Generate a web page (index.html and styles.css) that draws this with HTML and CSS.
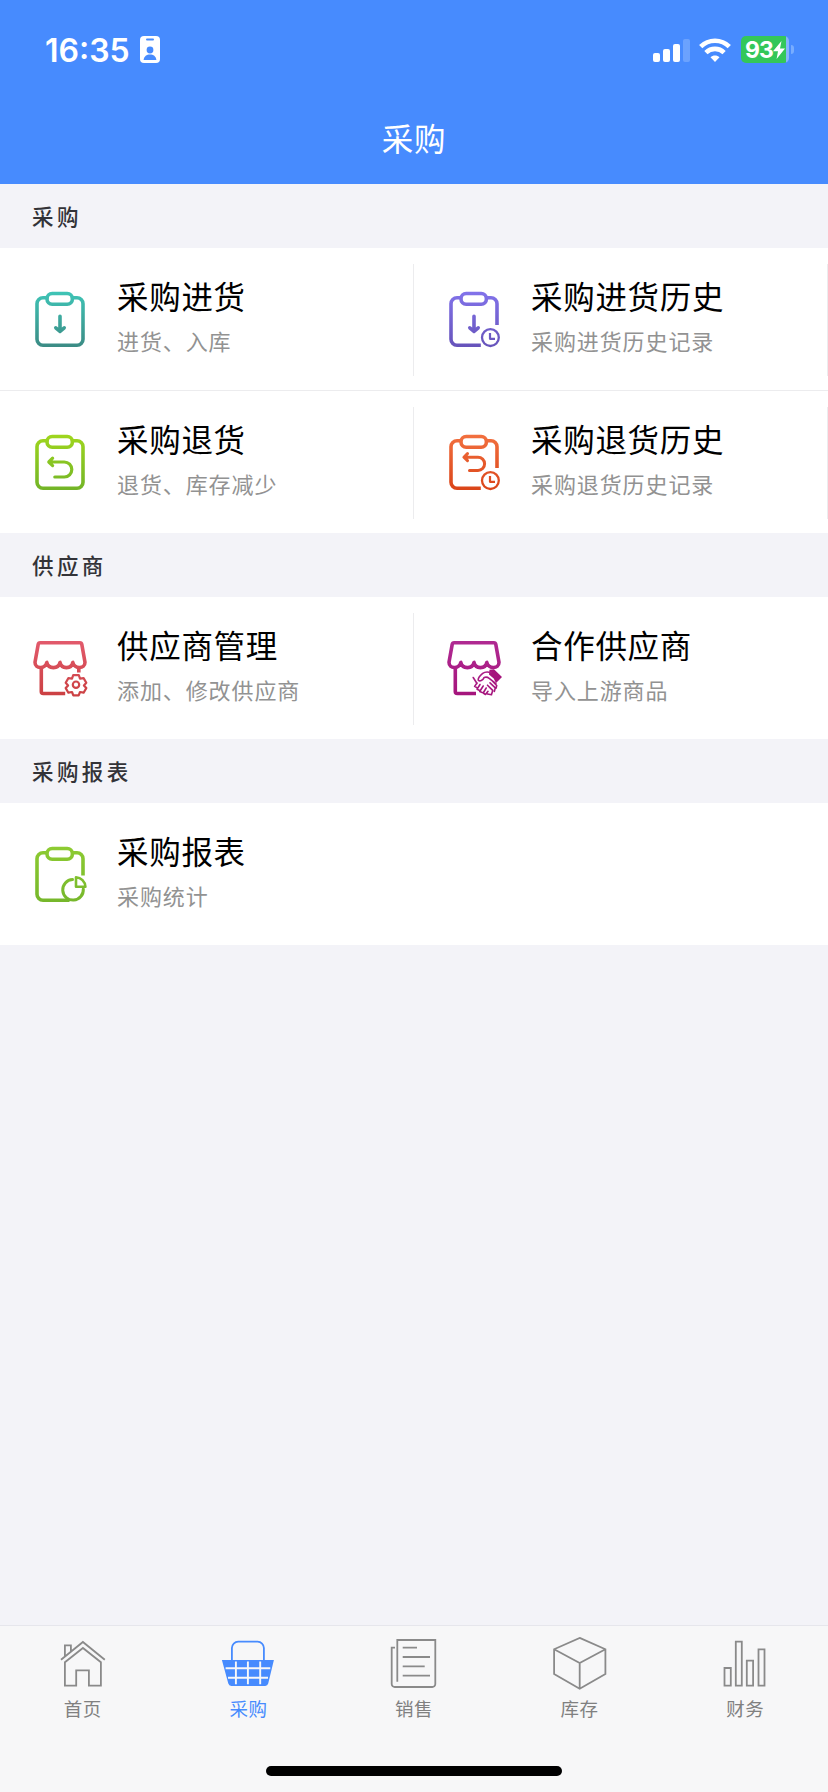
FILE: index.html
```html
<!DOCTYPE html>
<html lang="zh-CN">
<head>
<meta charset="utf-8">
<title>采购</title>
<link rel="stylesheet" href="styles.css">
</head>
<body>
<svg class="defs" width="0" height="0" aria-hidden="true">
  <defs>
    <linearGradient id="teal" gradientUnits="userSpaceOnUse" x1="0" y1="3" x2="0" y2="58"><stop offset="0" stop-color="#3fc4b6"/><stop offset="1" stop-color="#3b8b84"/></linearGradient>
    <linearGradient id="purple" gradientUnits="userSpaceOnUse" x1="0" y1="3" x2="0" y2="58"><stop offset="0" stop-color="#8273ea"/><stop offset="1" stop-color="#6653ba"/></linearGradient>
    <linearGradient id="lime" gradientUnits="userSpaceOnUse" x1="0" y1="3" x2="0" y2="58"><stop offset="0" stop-color="#9fd61e"/><stop offset="1" stop-color="#72b427"/></linearGradient>
    <linearGradient id="orange" gradientUnits="userSpaceOnUse" x1="0" y1="3" x2="0" y2="58"><stop offset="0" stop-color="#f2703f"/><stop offset="1" stop-color="#da4418"/></linearGradient>
    <linearGradient id="red" gradientUnits="userSpaceOnUse" x1="0" y1="3" x2="0" y2="58"><stop offset="0" stop-color="#e25a6c"/><stop offset="1" stop-color="#cb4042"/></linearGradient>
    <linearGradient id="magenta" gradientUnits="userSpaceOnUse" x1="0" y1="3" x2="0" y2="58"><stop offset="0" stop-color="#b02a92"/><stop offset="1" stop-color="#a5147c"/></linearGradient>
    <linearGradient id="leaf" gradientUnits="userSpaceOnUse" x1="0" y1="3" x2="0" y2="58"><stop offset="0" stop-color="#8dcb32"/><stop offset="1" stop-color="#76b72b"/></linearGradient>
    <g id="clip"><rect x="17" y="4.5" width="25.4" height="10.8" rx="5.2"/></g>
    <g id="board"><path d="M17 8.8H13a6 6 0 0 0-6 6V50.2a6 6 0 0 0 6 6H47a6 6 0 0 0 6-6V14.8a6 6 0 0 0-6-6H42.4"/></g>
    <g id="board-open"><path stroke-linecap="butt" d="M17 8.8H13a6 6 0 0 0-6 6V50.2a6 6 0 0 0 6 6H36.8M42.4 8.8H47a6 6 0 0 1 6 6V36"/></g>
    <g id="clock"><circle cx="46.4" cy="48.6" r="8.4" stroke-width="2.3"/><path stroke-width="2.2" stroke-linecap="butt" d="M46 44v5.8h5"/></g>
    <g id="awning"><path d="M10.2 4.8H49.8a2 2 0 0 1 2 1.6L55 24.2C55 31.2 44.5 31.4 42.8 24.4C41.5 31.4 31.5 31.4 30 24.4C28.5 31.4 18.3 31.4 16.8 24.4C15.2 31.4 5 31.2 5 24.2L8.2 6.4a2 2 0 0 1 2-1.6Z"/></g>
  </defs>
</svg>
<div class="screen">
  <header class="header">
    <div class="status">
      <div class="status-left">
        <span class="time">16:35</span>
        <svg class="badge-icon" viewBox="0 0 20 27"><rect width="20" height="27" rx="4" fill="#fff"/><rect x="6" y="2.6" width="8" height="2" rx="1" fill="#478bfe"/><circle cx="10" cy="14" r="3.4" fill="#478bfe"/><path d="M3.6 24c.4-3.700 3-5.500 6.400-5.500s6 1.800 6.400 5.500z" fill="#478bfe"/></svg>
      </div>
      <div class="status-right">
        <svg class="signal" viewBox="0 0 38 24" fill="#fff"><rect y="15" width="7" height="9" rx="2"/><rect x="10" y="11" width="7" height="13" rx="2"/><rect x="20" y="6" width="7" height="18" rx="2"/><rect x="30" y="1" width="7" height="23" rx="2" opacity=".2"/></svg>
        <svg class="wifi" viewBox="0 0 32 24"><g fill="none" stroke="#fff" stroke-width="4.600"><path d="M1.700 8.700a20.300 20.300 0 0 1 28.600 0"/><path d="M6.900 14.600a13 13 0 0 1 18.200 0"/></g><path d="M16 24l-4.500-4.700c2.400-2.300 6.600-2.300 9 0z" fill="#fff"/></svg>
        <div class="battery"><span class="battery-level">93</span><svg class="bolt" viewBox="0 0 12 18"><path d="M8.500 0L0 10.200h5L3.600 18L12 7.400H7z" fill="#fff"/></svg></div>
        <span class="battery-tip"></span>
      </div>
    </div>
    <h1 class="title">采购</h1>
  </header>

  <main class="content">
    <h2 class="section">采购</h2>
    <div class="grid">
      <div class="item lined">
        <svg class="icon" viewBox="0 0 60 60" stroke="url(#teal)"><use href="#board"/><use href="#clip"/><path d="M30 27.300V42M25.800 38.800L30 42.500L34.200 38.800"/></svg>
        <div class="text"><div class="name">采购进货</div><div class="desc">进货、入库</div></div>
      </div>
      <div class="item lined">
        <svg class="icon" viewBox="0 0 60 60" stroke="url(#purple)"><use href="#board-open"/><use href="#clip"/><path d="M30 27.300V42M25.800 38.800L30 42.500L34.200 38.800"/><use href="#clock"/></svg>
        <div class="text"><div class="name">采购进货历史</div><div class="desc">采购进货历史记录</div></div>
      </div>
      <div class="rule"></div>
      <div class="item lined">
        <svg class="icon" viewBox="0 0 60 60" stroke="url(#lime)"><use href="#board"/><use href="#clip"/><path stroke-width="3.200" d="M20 30H34.300a7.500 7.500 0 0 1 0 15H24.800M22.600 26.200L18.800 30L22.600 33.600"/></svg>
        <div class="text"><div class="name">采购退货</div><div class="desc">退货、库存减少</div></div>
      </div>
      <div class="item lined">
        <svg class="icon" viewBox="0 0 60 60" stroke="url(#orange)"><use href="#board-open"/><use href="#clip"/><path stroke-width="3" d="M21 25.200H34a6.600 6.600 0 0 1 0 13.200H25.500M23.500 21.600L19.900 25.200L23.500 28.700"/><use href="#clock"/></svg>
        <div class="text"><div class="name">采购退货历史</div><div class="desc">采购退货历史记录</div></div>
      </div>
    </div>

    <h2 class="section">供应商</h2>
    <div class="grid">
      <div class="item lined">
        <svg class="icon" viewBox="0 0 60 60" stroke="url(#red)"><use href="#awning"/><path stroke-linecap="butt" d="M11.300 29V53.500a2 2 0 0 0 2 2H35.200M48.800 29V34.500"/><g stroke-width="2.200"><circle cx="46" cy="46.700" r="3.200"/><path d="M43.200 37.200h5.600l1.200 3.500 3.600-.6 2.700 4.700-2.400 2.600 2.400 2.700-2.700 4.600-3.600-.7-1.300 3.300h-5.400l-1.300-3.300-3.600.7-2.700-4.600 2.400-2.700-2.400-2.600 2.700-4.700 3.600.6z"/></g></svg>
        <div class="text"><div class="name">供应商管理</div><div class="desc">添加、修改供应商</div></div>
      </div>
      <div class="item">
        <svg class="icon" viewBox="0 0 60 60" stroke="url(#magenta)"><use href="#awning"/><path stroke-linecap="butt" d="M11.300 29V53.500a2 2 0 0 0 2 2H32"/><path fill="#a5147c" stroke="none" d="M45.500 31.800l4.500-.6 8 7.700-6 6.200-2.300-4.700-4.700-3.800z"/><path stroke-width="1.600" d="M47 34.500c-3-.8-5.600-1.300-8.300.8-2.500 2-4.600 4.400-4.500 6.600 1.500 2 4.700.5 6-2.500 2-.6 3.600-.2 5 1l6.700 5.300M29.200 39.500l3.800 6M33 45l-2.400 3.400 2.500 1.300M36 46.500l-2.900 4.700 2.600 1.200M39.200 48l-3.500 5.500 2.500 1M42.200 50l-3 5 2.300 1.500 2.500-3.200M43.500 56l4 .8M43.500 47.200l5.200 5.200-1.200 4M46 44.800l5.300 5-.9 3.600M48.300 43l4.400 4.500-.6 2.600"/></svg>
        <div class="text"><div class="name">合作供应商</div><div class="desc">导入上游商品</div></div>
      </div>
    </div>

    <h2 class="section">采购报表</h2>
    <div class="grid">
      <div class="item">
        <svg class="icon" viewBox="0 0 60 60" stroke="url(#leaf)"><path stroke-linecap="butt" d="M17 8.800H13a6 6 0 0 0-6 6V50.200a6 6 0 0 0 6 6H39.500M42.400 8.800H47a6 6 0 0 1 6 6V31.500"/><use href="#clip"/><path stroke-width="3" d="M42.500 35.500a10.300 10.300 0 1 0 10.800 9.500"/><path stroke-width="2.600" d="M46 33.200a10 10 0 0 1 9.400 9.500H46z"/></svg>
        <div class="text"><div class="name">采购报表</div><div class="desc">采购统计</div></div>
      </div>
    </div>
  </main>

  <footer class="footer">
    <nav class="tabs">
      <div class="tab"><svg class="tab-icon" viewBox="0 0 60 60"><path d="M8 25.800L29.900 8L51.800 25.800M11.900 22V11.300h6V17.500M29.900 14L11.900 28.300V51.700H23.200V36.300H35.900V51.700H47.900V28.300z"/></svg><span>首页</span></div>
      <div class="tab active"><svg class="tab-icon" viewBox="0 0 60 60"><path d="M13.900 27V14a6.300 6.300 0 0 1 6.300-6.300H39.600a6.300 6.300 0 0 1 6.300 6.300V27"/><path fill="#478bfe" stroke="none" d="M3.900 26H55.900L50.200 49.500a3.200 3.200 0 0 1-3 2.400H13.300a3.200 3.200 0 0 1-3-2.400z"/><path stroke="#f7f7f8" stroke-width="1.900" d="M17.900 27.500V50.300M29.900 27.500V50.300M42.200 27.500V50.300M7.600 34.200H52.300M10 43.700H50"/></svg><span>采购</span></div>
      <div class="tab"><svg class="tab-icon" viewBox="0 0 60 60"><path d="M13.300 47.700V6H51.300V50a3 3 0 0 1-3 3H10.700a3 3 0 0 1-3-3V13.700H11M18.700 13.700H33M18.700 23H46M18.700 32.300H40.700M18.700 41.700H46"/></svg><span>销售</span></div>
      <div class="tab"><svg class="tab-icon" viewBox="0 0 60 60"><path d="M29.700 3.900L55.400 15.300V40L29.700 54.700L4.100 40V15.300zM4.100 15.300L29.700 29L55.400 15.300M29.700 29V54.700"/></svg><span>库存</span></div>
      <div class="tab"><svg class="tab-icon" viewBox="0 0 60 60"><path d="M9.500 34h6.300V51.700H9.500zM20.800 7.700h6V51.700h-6zM31.800 26.700h6.300V51.700h-6.300zM43.500 15.300h6V51.700h-6z"/></svg><span>财务</span></div>
    </nav>
    <div class="home-bar"></div>
  </footer>
</div>
</body>
</html>
```
FILE: styles.css
```css
* { box-sizing: border-box; }
body {
  margin: 0;
  font-family: "Noto Sans CJK SC", sans-serif;
  background: #f3f3f8;
}
svg { display: block; flex: none; }
.defs { position: absolute; }
.screen {
  width: 828px;
  height: 1792px;
  display: flex;
  flex-direction: column;
}
.header {
  height: 184px;
  background: #478bfe;
  color: #fff;
}
.status {
  height: 99px;
  padding: 0 34px 0 45px;
  display: flex;
  justify-content: space-between;
  align-items: center;
}
.status-left, .status-right { display: flex; align-items: center; }
.status-left { gap: 11px; }
.time {
  font: 600 32px/36px Inter, sans-serif;
  width: 84px;
  padding-top: 2px;
  white-space: nowrap;
}
.badge-icon { width: 20px; height: 27px; }
.signal { width: 38px; height: 24px; }
.wifi { width: 32px; height: 24px; margin-left: 8px; }
.battery {
  width: 48px;
  height: 27px;
  margin-left: 10px;
  padding-left: 4px;
  border-radius: 5px;
  background: linear-gradient(90deg, #34c759 45px, #84b5fb 45px);
  display: flex;
  align-items: center;
}
.battery-level { font: 700 23px/27px Inter, sans-serif; letter-spacing: -1px; width: 28px; padding-top: 1px; }
.bolt { width: 12px; height: 18px; }
.battery-tip {
  width: 3px;
  height: 9px;
  margin-left: 2px;
  border-radius: 0 3px 3px 0;
  background: #78adff;
}
.title {
  margin: 0;
  height: 82px;
  font-size: 31.5px;
  line-height: 77px;
  font-weight: 400;
  letter-spacing: 0.7px;
  text-align: center;
}
.content { flex: 1; }
.section {
  margin: 0;
  height: 64px;
  padding-left: 32px;
  font-size: 21.5px;
  line-height: 63px;
  font-weight: 500;
  letter-spacing: 3.4px;
  color: #333338;
}
.grid {
  display: grid;
  grid-template-columns: 1fr 1fr;
  background: #fff;
}
.rule { grid-column: 1 / -1; height: 1px; background: #ececee; }
.item {
  height: 142px;
  padding-left: 30px;
  display: flex;
  align-items: center;
  gap: 27px;
}
.lined {
  background: linear-gradient(#ececee, #ececee) no-repeat right 0 top 16px / 1px 112px;
}
.icon {
  width: 60px;
  height: 60px;
  fill: none;
  stroke-width: 3.600px;
  stroke-linecap: round;
  stroke-linejoin: round;
}
.text { padding-bottom: 10px; }
.name {
  font-size: 31.5px;
  line-height: 44px;
  letter-spacing: 0.7px;
  color: #000;
}
.desc {
  margin-top: 7px;
  font-size: 22px;
  line-height: 32px;
  letter-spacing: 0.9px;
  color: #929292;
}
.footer {
  height: 167px;
  border-top: 1px solid #e6e6ec;
  background: #f7f7f8;
  display: flex;
  flex-direction: column;
  align-items: center;
}
.tabs { width: 100%; height: 140px; padding-top: 8px; display: flex; }
.tab {
  flex: 1;
  display: flex;
  flex-direction: column;
  align-items: center;
  font-size: 18.5px;
  line-height: 29px;
  font-weight: 400;
  letter-spacing: 0.5px;
  color: #808080;
}
.tab-icon { width: 60px; height: 60px; fill: none; stroke: #8a8a8a; stroke-width: 1.800px; }
.active { color: #478bfe; }
.active .tab-icon { stroke: #478bfe; }
.home-bar { width: 296px; height: 10px; border-radius: 5px; background: #000; }
```
